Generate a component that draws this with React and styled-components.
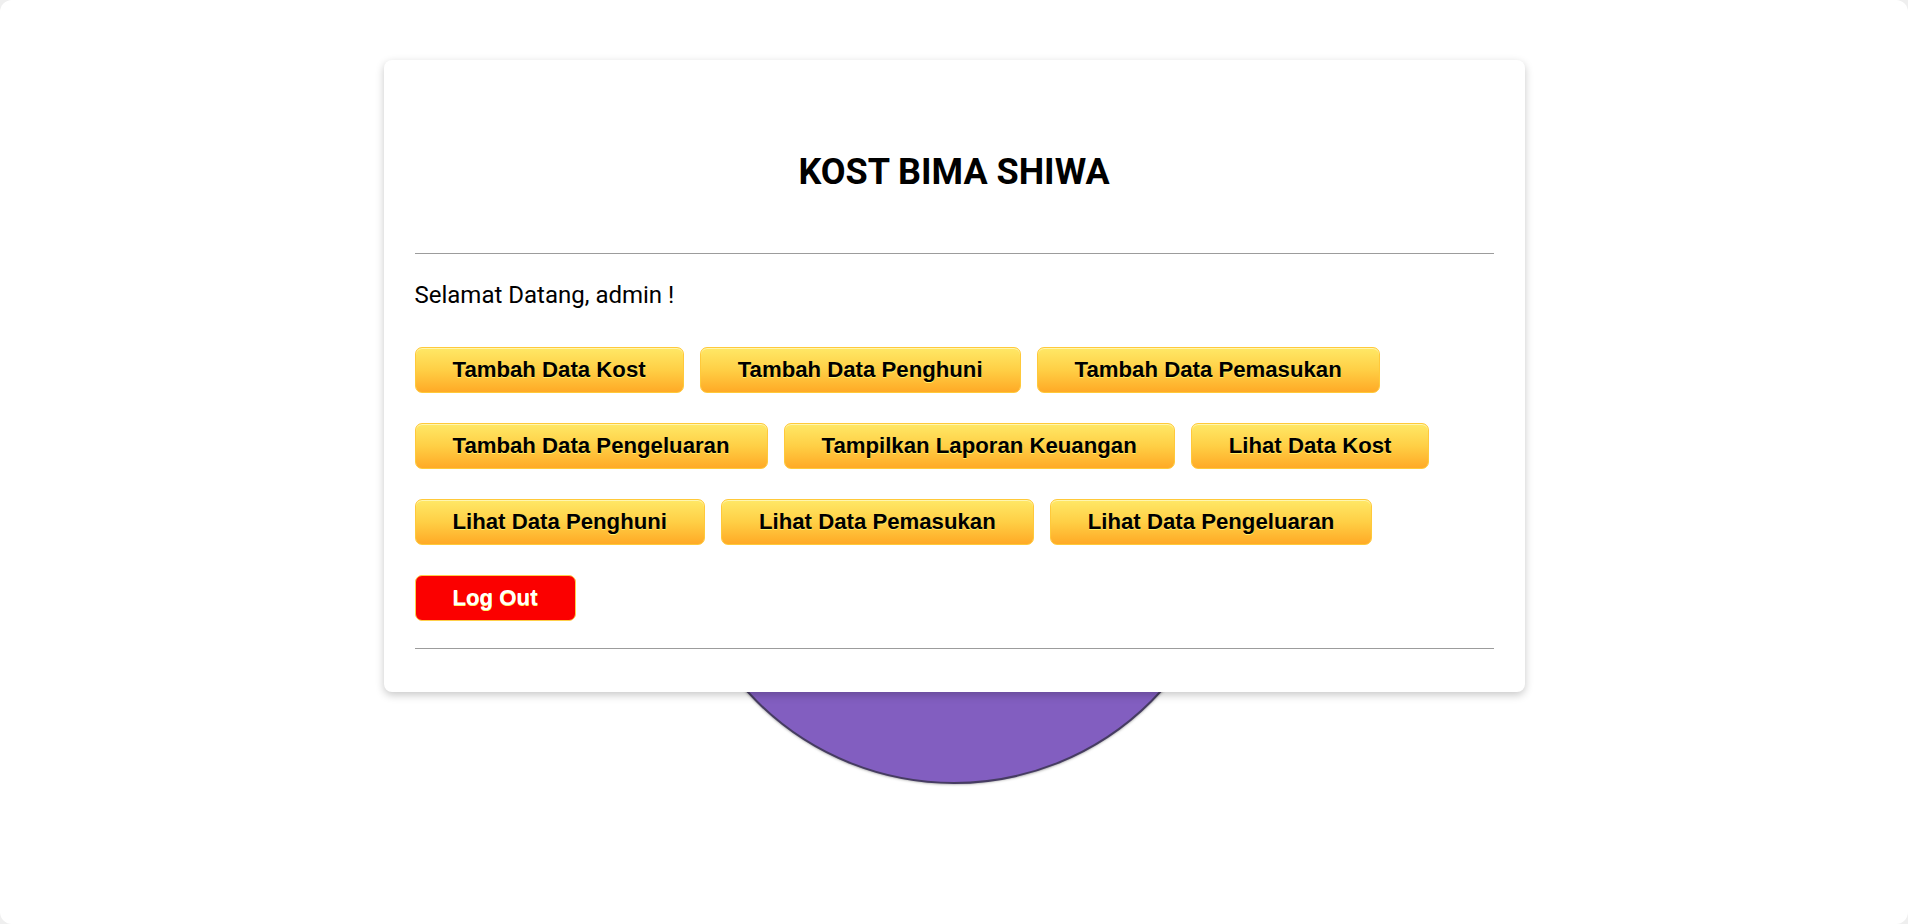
import React from "react";
import styled, { createGlobalStyle } from "styled-components";

const GlobalStyle = createGlobalStyle`
  html, body {
    margin: 0;
    padding: 0;
    background: #efefef;
  }
  * {
    box-sizing: border-box;
  }
`;

const Page = styled.main`
  position: relative;
  width: 1908px;
  height: 924px;
  background: #ffffff;
  border-radius: 12px;
  overflow: hidden;
  padding-top: 60px;
  font-family: Roboto, "Liberation Sans", sans-serif;
`;

// decorative disc sitting behind the card
const Circle = styled.div`
  position: absolute;
  left: calc(50% - 280px);
  top: 224px;
  width: 560px;
  height: 560px;
  border-radius: 50%;
  background: #825ec0;
  border: 2px solid #463c62;
  box-shadow: 0 0 3px rgba(0, 0, 0, 0.5);
`;

const Card = styled.section`
  position: relative;
  width: 1141px;
  margin: 0 auto;
  padding: 0 31px 43px;
  background: #ffffff;
  border-radius: 8px;
  box-shadow: 0 3px 8px rgba(0, 0, 0, 0.22);
`;

const Title = styled.h1`
  margin: 0;
  padding: 91px 0 60px;
  text-align: center;
  font-family: Roboto, "Liberation Sans", sans-serif;
  font-size: 36px;
  font-weight: 700;
  color: #000;
  line-height: 42px;
`;

const Divider = styled.hr`
  margin: 0;
  border: 0;
  border-top: 1px solid #9c9c9c;
  height: 0;
`;

const Welcome = styled.p`
  margin: 27px 0 38px;
  font-size: 24px;
  line-height: 28px;
  color: #000;
`;

const Menu = styled.nav`
  display: flex;
  flex-wrap: wrap;
  column-gap: 16px;
  row-gap: 30px;
  margin-bottom: 27px;
`;

const Button = styled.a`
  display: inline-block;
  padding: 10px 37px;
  border-radius: 7px;
  border: 1px solid ${({ $danger }) => ($danger ? "#ffcf4a" : "#ffc93a")};
  background: ${({ $danger }) =>
    $danger ? "#fb0000" : "linear-gradient(to bottom, #ffe866 0%, #ffcf45 50%, #ffaa26 100%)"};
  box-shadow: ${({ $danger }) => ($danger ? "none" : "inset 0 1px 0 0 #fff6af")};
  color: ${({ $danger }) => ($danger ? "#ffffff" : "#000000")};
  font-family: "Liberation Sans", Arial, sans-serif;
  font-size: 22.2px;
  font-weight: 700;
  line-height: 24px;
  text-decoration: none;
  text-shadow: 0 1px 0 #ffee66;
  white-space: nowrap;
  cursor: pointer;
`;

const links = [
  "Tambah Data Kost",
  "Tambah Data Penghuni",
  "Tambah Data Pemasukan",
  "Tambah Data Pengeluaran",
  "Tampilkan Laporan Keuangan",
  "Lihat Data Kost",
  "Lihat Data Penghuni",
  "Lihat Data Pemasukan",
  "Lihat Data Pengeluaran",
];

export default function App() {
  return (
    <>
      <GlobalStyle />
      <Page>
        <Circle />
        <Card>
          <Title>KOST BIMA SHIWA</Title>
          <Divider />
          <Welcome>Selamat Datang, admin !</Welcome>
          <Menu>
            {links.map((label) => (
              <Button key={label} href="#">
                {label}
              </Button>
            ))}
            <Button $danger href="#">
              Log Out
            </Button>
          </Menu>
          <Divider />
        </Card>
      </Page>
    </>
  );
}
